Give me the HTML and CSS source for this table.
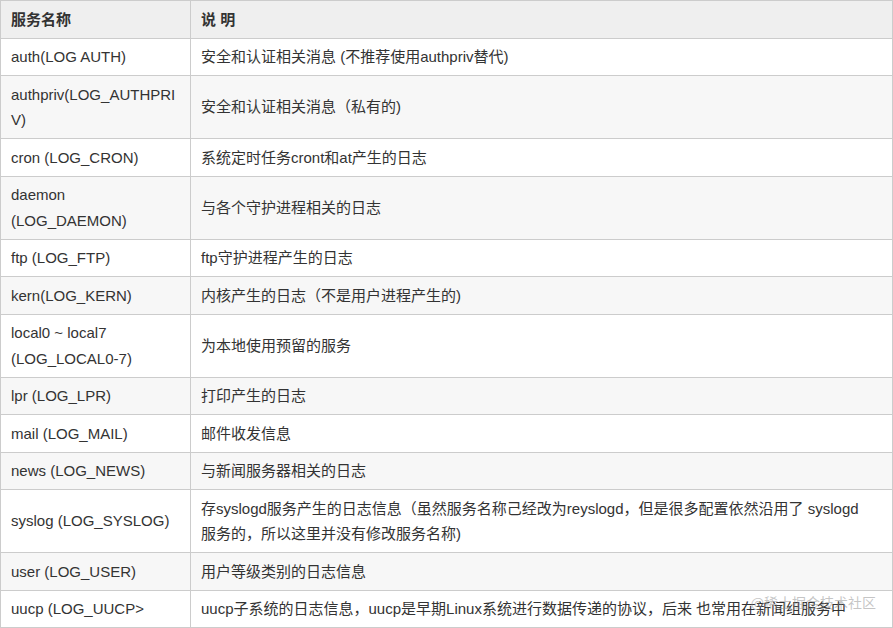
FILE: index.html
```html
<!DOCTYPE html>
<html lang="zh-CN">
<head>
<meta charset="utf-8">
<title>日志服务</title>
<link rel="stylesheet" href="styles.css">
</head>
<body>
<div class="wrap">
<table class="log-table">
  <thead>
    <tr><th class="c1">服务名称</th><th>说 明</th></tr>
  </thead>
  <tbody>
    <tr><td class="c1">auth(LOG AUTH)</td><td>安全和认证相关消息 (不推荐使用authpriv替代)</td></tr>
    <tr><td class="c1">authpriv(LOG_AUTHPRIV)</td><td>安全和认证相关消息（私有的)</td></tr>
    <tr><td class="c1">cron (LOG_CRON)</td><td>系统定时任务cront和at产生的日志</td></tr>
    <tr><td class="c1">daemon (LOG_DAEMON)</td><td>与各个守护进程相关的日志</td></tr>
    <tr><td class="c1">ftp (LOG_FTP)</td><td>ftp守护进程产生的日志</td></tr>
    <tr><td class="c1">kern(LOG_KERN)</td><td>内核产生的日志（不是用户进程产生的)</td></tr>
    <tr><td class="c1">local0 ~ local7 (LOG_LOCAL0-7)</td><td>为本地使用预留的服务</td></tr>
    <tr><td class="c1">lpr (LOG_LPR)</td><td>打印产生的日志</td></tr>
    <tr><td class="c1">mail (LOG_MAIL)</td><td>邮件收发信息</td></tr>
    <tr><td class="c1">news (LOG_NEWS)</td><td>与新闻服务器相关的日志</td></tr>
    <tr><td class="c1">syslog (LOG_SYSLOG)</td><td>存syslogd服务产生的日志信息（虽然服务名称己经改为reyslogd，但是很多配置依然沿用了 syslogd<br>服务的，所以这里并没有修改服务名称)</td></tr>
    <tr><td class="c1">user (LOG_USER)</td><td>用户等级类别的日志信息</td></tr>
    <tr><td class="c1">uucp (LOG_UUCP&gt;</td><td>uucp子系统的日志信息，uucp是早期Linux系统进行数据传递的协议，后来 也常用在新闻组服务中</td></tr>
  </tbody>
</table>
<div class="watermark">@稀土掘金技术社区</div>
</div>
</body>
</html>
```
FILE: styles.css
```css
html, body {
  margin: 0;
  padding: 0;
  background: #fff;
}
.wrap {
  position: relative;
  width: 893px;
  height: 628px;
  overflow: hidden;
}
.log-table {
  width: 893px;
  border-collapse: collapse;
  table-layout: fixed;
  font-family: "Liberation Sans", "Noto Sans CJK SC", sans-serif;
  font-size: 15px;
  line-height: 25.5px;
  color: #333;
}
.log-table th,
.log-table td {
  border: 1px solid #ccc;
  padding: 5.5px 10px;
  text-align: left;
  vertical-align: middle;
  word-break: normal;
  overflow-wrap: anywhere;
}
.log-table th {
  background: #efefef;
  font-weight: bold;
}
.log-table .c1 {
  width: 169px;
}
.log-table tbody tr:nth-child(even) td {
  background: #f7f7f7;
}
.watermark {
  position: absolute;
  right: 17px;
  bottom: 16px;
  font-family: "Noto Sans CJK SC", sans-serif;
  font-size: 14px;
  line-height: 20px;
  color: rgba(140, 140, 140, 0.5);
}
```
